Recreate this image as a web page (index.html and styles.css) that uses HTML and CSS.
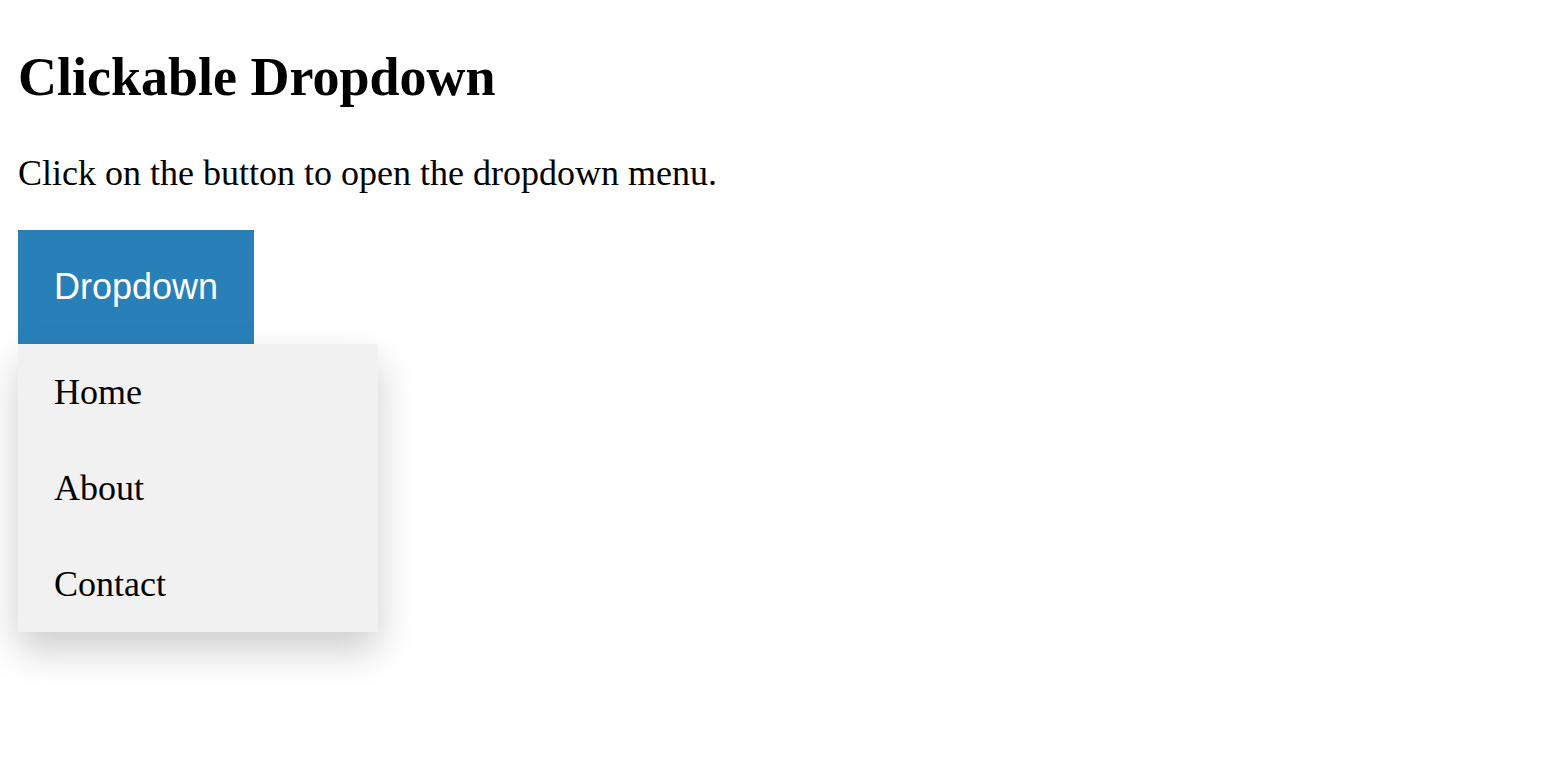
FILE: index.html
```html
<!DOCTYPE html>
<html lang="en">
<head>
<meta charset="utf-8">
<title>Clickable Dropdown</title>
<link rel="stylesheet" href="styles.css">
</head>
<body>
<h1 class="title">Clickable Dropdown</h1>
<p class="intro">Click on the button to open the dropdown menu.</p>
<div class="dropdown">
  <button class="dropbtn">Dropdown</button>
  <div class="dropdown-content">
    <a href="#home">Home</a>
    <a href="#about">About</a>
    <a href="#contact">Contact</a>
  </div>
</div>
</body>
</html>
```
FILE: styles.css
```css
html, body {
  background: #ffffff;
}
body {
  margin: 0;
  padding: 0 18px 80px;
  min-height: 700px;
  font-family: "Liberation Serif", "Times New Roman", serif;
  color: #000;
}
.title {
  margin: 46px 0 0;
  font-size: 54px;
  line-height: 62px;
  font-weight: bold;
}
.intro {
  margin: 44px 0 36px;
  font-size: 36px;
  line-height: 42px;
}
.dropdown {
  display: flex;
  flex-direction: column;
  align-items: flex-start;
}
.dropbtn {
  display: block;
  background-color: #2980B9;
  color: #ffffff;
  padding: 36px;
  margin: 0;
  font-family: "Liberation Sans", Arial, sans-serif;
  font-size: 36px;
  line-height: 42px;
  border: none;
  cursor: pointer;
}
.dropdown-content {
  background-color: #f1f1f1;
  width: 360px;
  box-shadow: 0 18px 36px 0 rgba(0, 0, 0, 0.2);
}
.dropdown-content a {
  display: block;
  color: #000;
  padding: 27px 36px;
  font-size: 36px;
  line-height: 42px;
  text-decoration: none;
}
```
